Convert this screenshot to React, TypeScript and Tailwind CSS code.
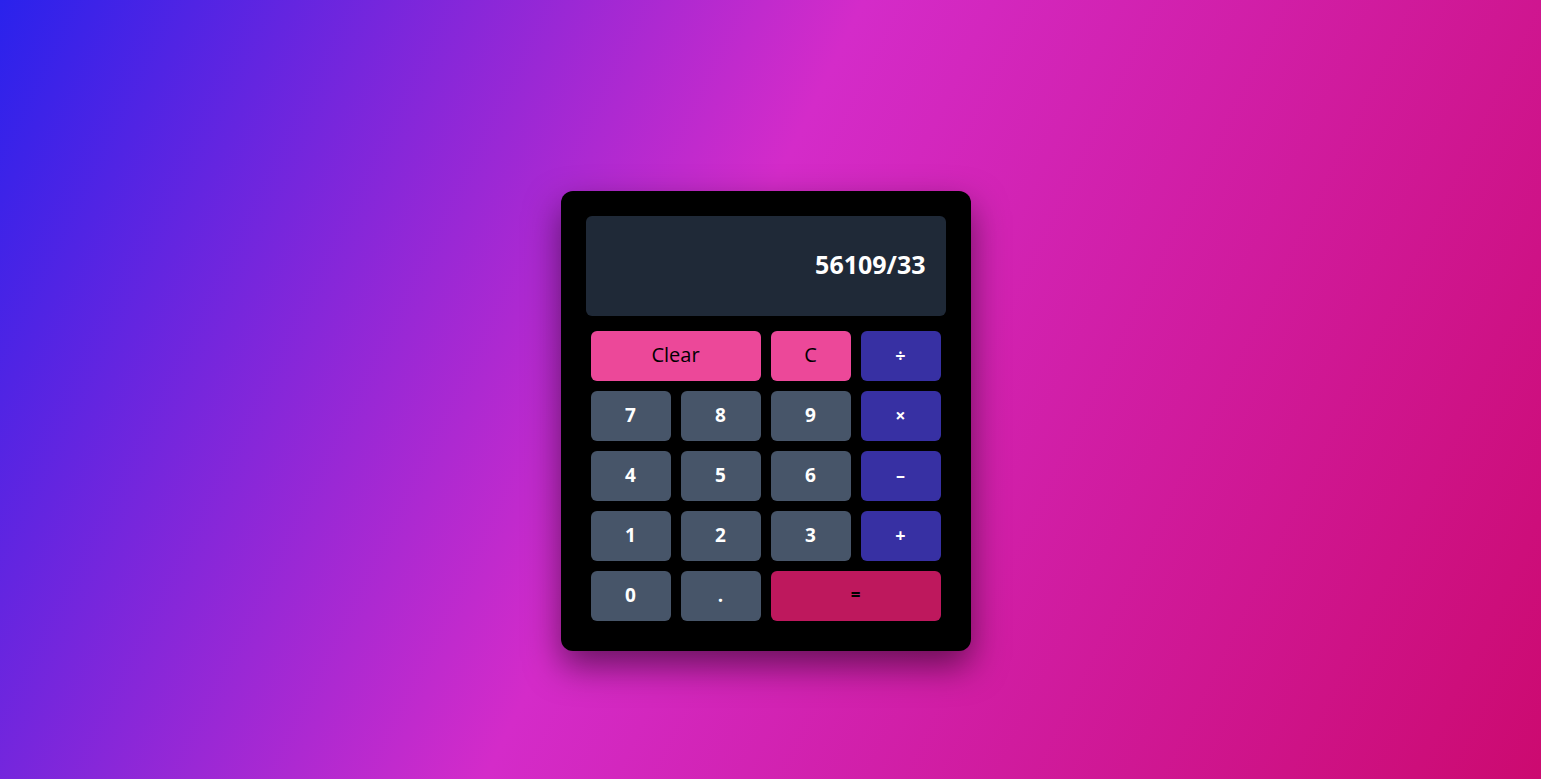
import React from "react"

type Key = { label: string; kind: "clear" | "op" | "num" | "eq"; span?: number }

const keys: Key[] = [
  { label: "Clear", kind: "clear", span: 2 },
  { label: "C", kind: "clear" },
  { label: "÷", kind: "op" },
  { label: "7", kind: "num" },
  { label: "8", kind: "num" },
  { label: "9", kind: "num" },
  { label: "×", kind: "op" },
  { label: "4", kind: "num" },
  { label: "5", kind: "num" },
  { label: "6", kind: "num" },
  { label: "–", kind: "op" },
  { label: "1", kind: "num" },
  { label: "2", kind: "num" },
  { label: "3", kind: "num" },
  { label: "+", kind: "op" },
  { label: "0", kind: "num" },
  { label: ".", kind: "num" },
  { label: "=", kind: "eq", span: 2 },
]

const styles: Record<Key["kind"], string> = {
  clear: "bg-[#ec4899] text-black text-[20px] font-normal",
  op: "bg-[#3730a3] text-white text-[18px] font-bold",
  num: "bg-[#475569] text-white text-[19px] font-bold",
  eq: "bg-[#be185d] text-black text-[17px] font-bold",
}

export default function App() {
  return (
    <div
      className="flex h-[779px] w-full items-center justify-center bg-linear-[116deg] from-[#2a22ec] via-[#d42bc9] via-45% to-[#cc0a70] pt-[63px] pr-[10px]"
      style={{ fontFamily: "'Open Sans', 'Noto Sans', sans-serif" }}
    >
      <div className="w-[410px] rounded-xl bg-black p-[25px] shadow-[0_15px_35px_rgba(0,0,0,0.5)]">
        {/* display */}
        <div className="flex h-[100px] items-center justify-end rounded-md bg-[#1f2937] px-5 pb-[3px]">
          <span className="text-[25px] font-bold text-white">56109/33</span>
        </div>

        {/* keypad */}
        <div className="mt-[15px] grid grid-cols-4 gap-[10px] px-[5px] pb-[5px]">
          {keys.map((k) => (
            <button
              key={k.label}
              className={`flex h-[50px] items-center justify-center rounded-md pb-[2px] ${styles[k.kind]} ${
                k.span === 2 ? "col-span-2" : ""
              }`}
            >
              {k.label}
            </button>
          ))}
        </div>
      </div>
    </div>
  )
}
